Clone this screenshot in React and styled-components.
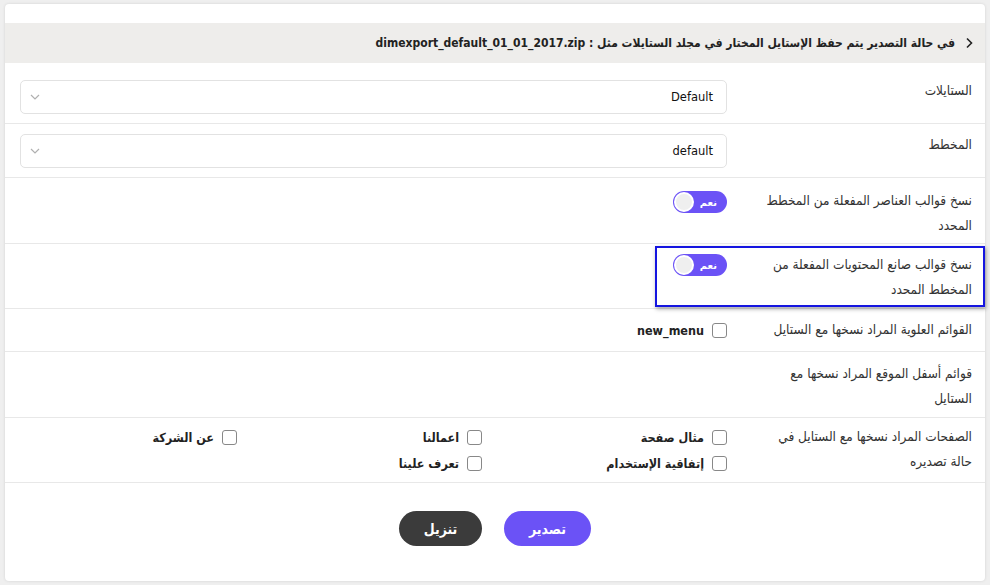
import React from "react";
import styled, { createGlobalStyle } from "styled-components";

const Global = createGlobalStyle`
  html, body { margin: 0; padding: 0; background: #efefef; }
  body { font-family: "DejaVu Sans", "Noto Sans", sans-serif; color: #333; }
  * { box-sizing: border-box; }
`;

const Page = styled.div`
  padding: 4px 5px 5px 5px;
`;

const Card = styled.div`
  direction: rtl;
  background: #fff;
  border-radius: 4px;
  box-shadow: 0 0 3px rgba(0, 0, 0, 0.12);
  padding-top: 19px;
  min-height: 576px;
`;

const Header = styled.div`
  display: flex;
  align-items: center;
  gap: 9px;
  height: 40px;
  background: #eeedeb;
  padding: 0 11px;
  font-family: "DejaVu Sans Condensed", "DejaVu Sans", sans-serif;
  font-weight: bold;
  font-size: 12px;
  color: #222;
`;

const Chevron = styled.svg`
  width: 10px;
  height: 12px;
  flex: none;
`;

const Row = styled.div`
  display: flex;
  align-items: flex-start;
  border-bottom: 1px solid #e8e8e8;
  padding: ${(p) => p.$pad || "8px 0"};
  margin-top: ${(p) => p.$mt || "0"};
`;

const Label = styled.div`
  width: 258px;
  flex: none;
  padding-right: 13px;
  padding-left: 32px;
  font-family: "DejaVu Sans Condensed", "DejaVu Sans", sans-serif;
  font-size: 13.5px;
  line-height: 25px;
  color: #333;
`;

const Field = styled.div`
  flex: 1;
  padding-left: 15px;
  display: flex;
  justify-content: flex-start;
`;

const Select = styled.div`
  flex: 1;
  height: 34px;
  border: 1px solid #e2e2e2;
  border-radius: 5px;
  display: flex;
  align-items: center;
  justify-content: space-between;
  padding: 0 13px 0 9px;
  font-size: 11.5px;
  color: #111;
  margin-top: 2px;
`;

const Toggle = styled.div`
  width: 54px;
  height: 22px;
  border-radius: 11px;
  background: #6b52f6;
  position: relative;
  margin-top: ${(p) => p.$mt || "3px"};
  color: #fff;
  font-size: 10px;
  font-weight: bold;
  display: flex;
  align-items: center;
  padding-right: 10px;
`;

const Knob = styled.span`
  position: absolute;
  left: 1px;
  top: 1px;
  width: 20px;
  height: 20px;
  border-radius: 50%;
  background: #efefef;
  border: 2px solid #fff;
`;

const Highlight = styled.div`
  display: flex;
  align-items: flex-start;
  border: 2px solid #1515e0;
  box-shadow: 1px 2px 4px rgba(0, 0, 0, 0.35);
  margin: 2px 0 1px;
  padding: 4px 0 3px;
  width: 330px;
  flex: none;
  position: relative;
  z-index: 1;
`;

const HLabel = styled(Label)`
  width: 256px;
  padding-right: 11px;
`;

const Checks = styled.div`
  display: grid;
  grid-template-columns: repeat(3, 245px);
  grid-auto-flow: column;
  grid-template-rows: ${(p) => (p.$rows ? `repeat(${p.$rows}, 26px)` : "26px")};
  align-content: start;
`;

const Check = styled.label`
  display: flex;
  align-items: center;
  gap: 8px;
  height: 26px;
  font-family: "DejaVu Sans Condensed", "DejaVu Sans", sans-serif;
  font-size: 12.5px;
  font-weight: bold;
  color: #222;
`;

const Box = styled.span`
  width: 15px;
  height: 15px;
  border: 1px solid #888;
  border-radius: 3px;
  flex: none;
  background: #fff;
`;

const Actions = styled.div`
  display: flex;
  justify-content: center;
  gap: 22px;
  padding: 28px 0 35px;
`;

const Button = styled.button`
  height: 35px;
  width: ${(p) => p.$w}px;
  border: none;
  border-radius: 18px;
  background: ${(p) => (p.$dark ? "#3b3b3b" : "#6b52f6")};
  color: #fff;
  font-family: "DejaVu Sans Condensed", "DejaVu Sans", sans-serif;
  font-size: 14px;
  font-weight: bold;
`;

const SelChevron = () => (
  <svg width="10" height="6" viewBox="0 0 10 6">
    <path d="M1 1l4 4 4-4" fill="none" stroke="#b0b0b0" strokeWidth="1.2" />
  </svg>
);

const Sel = ({ value }) => (
  <Select>
    <span>{value}</span>
    <SelChevron />
  </Select>
);

const Switch = ({ mt }) => (
  <Toggle $mt={mt}>
    نعم
    <Knob />
  </Toggle>
);

const CheckItem = ({ label }) => (
  <Check>
    <Box />
    {label}
  </Check>
);

export default function App() {
  return (
    <>
      <Global />
      <Page>
        <Card>
          <Header>
            <Chevron viewBox="0 0 10 12">
              <path d="M3 1.5l4.5 4.5L3 10.5" fill="none" stroke="#222" strokeWidth="1.6" />
            </Chevron>
            <span>
              في حالة التصدير يتم حفظ الإستايل المختار في مجلد الستايلات مثل :{" "}
              <bdi>dimexport_default_01_01_2017.zip</bdi>
            </span>
          </Header>
          <Row $mt="7px" $pad="8px 0 9px">
            <Label>الستايلات</Label>
            <Field>
              <Sel value="Default" />
            </Field>
          </Row>
          <Row $pad="8px 0 9px">
            <Label>المخطط</Label>
            <Field>
              <Sel value="default" />
            </Field>
          </Row>
          <Row $pad="10px 0 5px">
            <Label>نسخ قوالب العناصر المفعلة من المخطط المحدد</Label>
            <Field>
              <Switch />
            </Field>
          </Row>
          <Row $pad="0">
            <Highlight>
              <HLabel>نسخ قوالب صانع المحتويات المفعلة من المخطط المحدد</HLabel>
              <Switch mt="2px" />
            </Highlight>
          </Row>
          <Row $pad="8px 0">
            <Label>القوائم العلوية المراد نسخها مع الستايل</Label>
            <Field>
              <Checks>
                <CheckItem label="new_menu" />
              </Checks>
            </Field>
          </Row>
          <Row $pad="9px 0 6px">
            <Label>قوائم أسفل الموقع المراد نسخها مع الستايل</Label>
            <Field />
          </Row>
          <Row $pad="6px 0 6px">
            <Label>الصفحات المراد نسخها مع الستايل في حالة تصديره</Label>
            <Field>
              <Checks $rows={2}>
                <CheckItem label="مثال صفحة" />
                <CheckItem label="إتفاقية الإستخدام" />
                <CheckItem label="اعمالنا" />
                <CheckItem label="تعرف علينا" />
                <CheckItem label="عن الشركة" />
              </Checks>
            </Field>
          </Row>
          <Actions>
            <Button $w={87}>تصدير</Button>
            <Button $w={83} $dark>
              تنزيل
            </Button>
          </Actions>
        </Card>
      </Page>
    </>
  );
}
